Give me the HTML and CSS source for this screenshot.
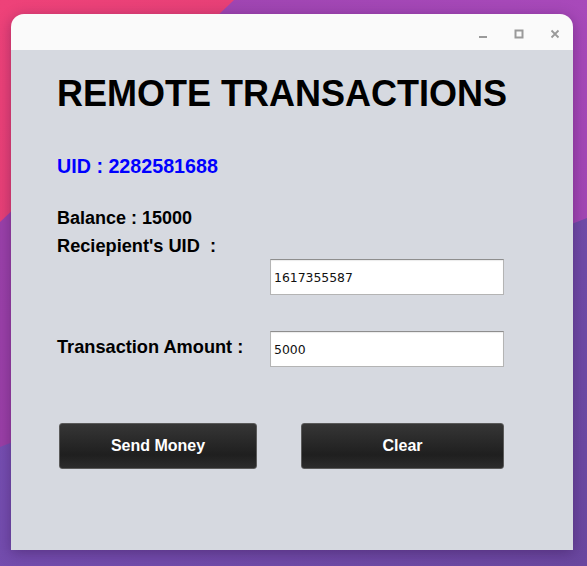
FILE: index.html
```html
<!DOCTYPE html>
<html>
<head>
<meta charset="utf-8">
<link rel="stylesheet" href="styles.css">
</head>
<body>
<svg class="wallpaper" viewBox="0 0 587 566" preserveAspectRatio="none" aria-hidden="true">
  <defs>
    <linearGradient id="gLow" x1="0" y1="0" x2="1" y2="1">
      <stop offset="0" stop-color="#7d52bc"/>
      <stop offset="1" stop-color="#6a479f"/>
    </linearGradient>
    <linearGradient id="gMid" x1="0" y1="1" x2="1" y2="0">
      <stop offset="0" stop-color="#9a3fa6"/>
      <stop offset="0.5" stop-color="#9a43ad"/>
      <stop offset="1" stop-color="#a849ba"/>
    </linearGradient>
    <linearGradient id="gPink" x1="0" y1="0" x2="1" y2="1">
      <stop offset="0" stop-color="#ee4279"/>
      <stop offset="1" stop-color="#e03e74"/>
    </linearGradient>
  </defs>
  <rect x="0" y="0" width="587" height="566" fill="url(#gLow)"/>
  <polygon points="0,0 587,0 587,218 0,447" fill="url(#gMid)"/>
  <polygon points="0,0 234,0 0,222" fill="url(#gPink)"/>
</svg>

<div class="window">
  <div class="titlebar">
    <span class="ctl">
      <svg width="10" height="10" viewBox="0 0 10 10"><rect x="1" y="7" width="8" height="2" fill="#9a9a9a"/></svg>
    </span>
    <span class="ctl">
      <svg width="10" height="10" viewBox="0 0 10 10"><rect x="1.5" y="1.5" width="7" height="7" fill="none" stroke="#9a9a9a" stroke-width="2"/></svg>
    </span>
    <span class="ctl">
      <svg width="10" height="10" viewBox="0 0 10 10"><path d="M1.5 1.5 L8.5 8.5 M8.5 1.5 L1.5 8.5" stroke="#9a9a9a" stroke-width="1.8"/></svg>
    </span>
  </div>
  <div class="content">
    <h1 class="title">REMOTE TRANSACTIONS</h1>
    <div class="uid">UID : 2282581688</div>
    <div class="balance">Balance : 15000</div>
    <div class="row row-recipient">
      <div class="label">Reciepient's UID&nbsp; :</div>
      <input class="field field-low" type="text" value="1617355587">
    </div>
    <div class="row row-amount">
      <div class="label label-low">Transaction Amount :</div>
      <input class="field" type="text" value="5000">
    </div>
    <div class="buttons">
      <button class="btn btn-send">Send Money</button>
      <button class="btn btn-clear">Clear</button>
    </div>
  </div>
</div>
</body>
</html>
```

FILE: styles.css
```css
html, body {
  margin: 0;
  padding: 0;
  width: 587px;
  height: 566px;
  overflow: hidden;
}
body {
  position: relative;
  font-family: "Liberation Sans", Arial, sans-serif;
  background: #7b52ba;
}
.wallpaper {
  position: absolute;
  left: 0;
  top: 0;
  width: 587px;
  height: 566px;
  z-index: 0;
}
.window {
  position: relative;
  z-index: 1;
  margin: 14px 0 0 11px;
  width: 562px;
  height: 536px;
  display: flex;
  flex-direction: column;
  border-radius: 13px 13px 0 0;
  overflow: hidden;
  box-shadow: 0 3px 14px rgba(40, 10, 60, 0.35);
}
.titlebar {
  height: 36px;
  background: #fafafa;
  display: flex;
  justify-content: flex-end;
  align-items: center;
  gap: 26px;
  padding: 4px 13px 0 0;
  box-sizing: border-box;
}
.ctl {
  width: 10px;
  height: 10px;
  display: flex;
}
.content {
  flex: 1;
  background: #d6d9e0;
  padding: 0 0 0 46px;
  display: flex;
  flex-direction: column;
  color: #000;
}
.title {
  margin: 24px 0 0 0;
  font-size: 36px;
  line-height: 40px;
  font-weight: bold;
}
.uid {
  margin-top: 40px;
  font-size: 19.7px;
  line-height: 24px;
  font-weight: bold;
  color: #0000ff;
}
.balance {
  margin-top: 29px;
  font-size: 18px;
  line-height: 22px;
  font-weight: bold;
}
.row {
  display: flex;
  align-items: flex-start;
}
.row-recipient {
  margin-top: 6px;
}
.row-amount {
  margin-top: 36px;
}
.label {
  width: 213px;
  font-size: 18.2px;
  line-height: 22px;
  font-weight: bold;
  white-space: pre;
}
.label-low {
  margin-top: 5px;
}
.field {
  width: 234px;
  height: 36px;
  box-sizing: border-box;
  margin: 0;
  padding: 0 0 0 3px;
  border: 1px solid #b4b4b4;
  border-top-color: #8e8e8e;
  box-shadow: inset 0 1px 1px rgba(0, 0, 0, 0.08);
  background: #fff;
  font-family: "DejaVu Sans", sans-serif;
  font-size: 12.4px;
  color: #111;
  outline: none;
}
.field-low {
  margin-top: 24px;
}
.buttons {
  margin-top: 56px;
  display: flex;
  gap: 44px;
  padding-left: 2px;
}
.btn {
  height: 46px;
  box-sizing: border-box;
  border: 1px solid #5a5a5a;
  border-radius: 3px;
  background: linear-gradient(#363636, #1f1f1f 70%, #2c2c2c);
  color: #fff;
  font-family: "Liberation Sans", Arial, sans-serif;
  font-size: 16px;
  font-weight: bold;
  padding: 0;
}
.btn-send {
  width: 198px;
}
.btn-clear {
  width: 203px;
}
```
